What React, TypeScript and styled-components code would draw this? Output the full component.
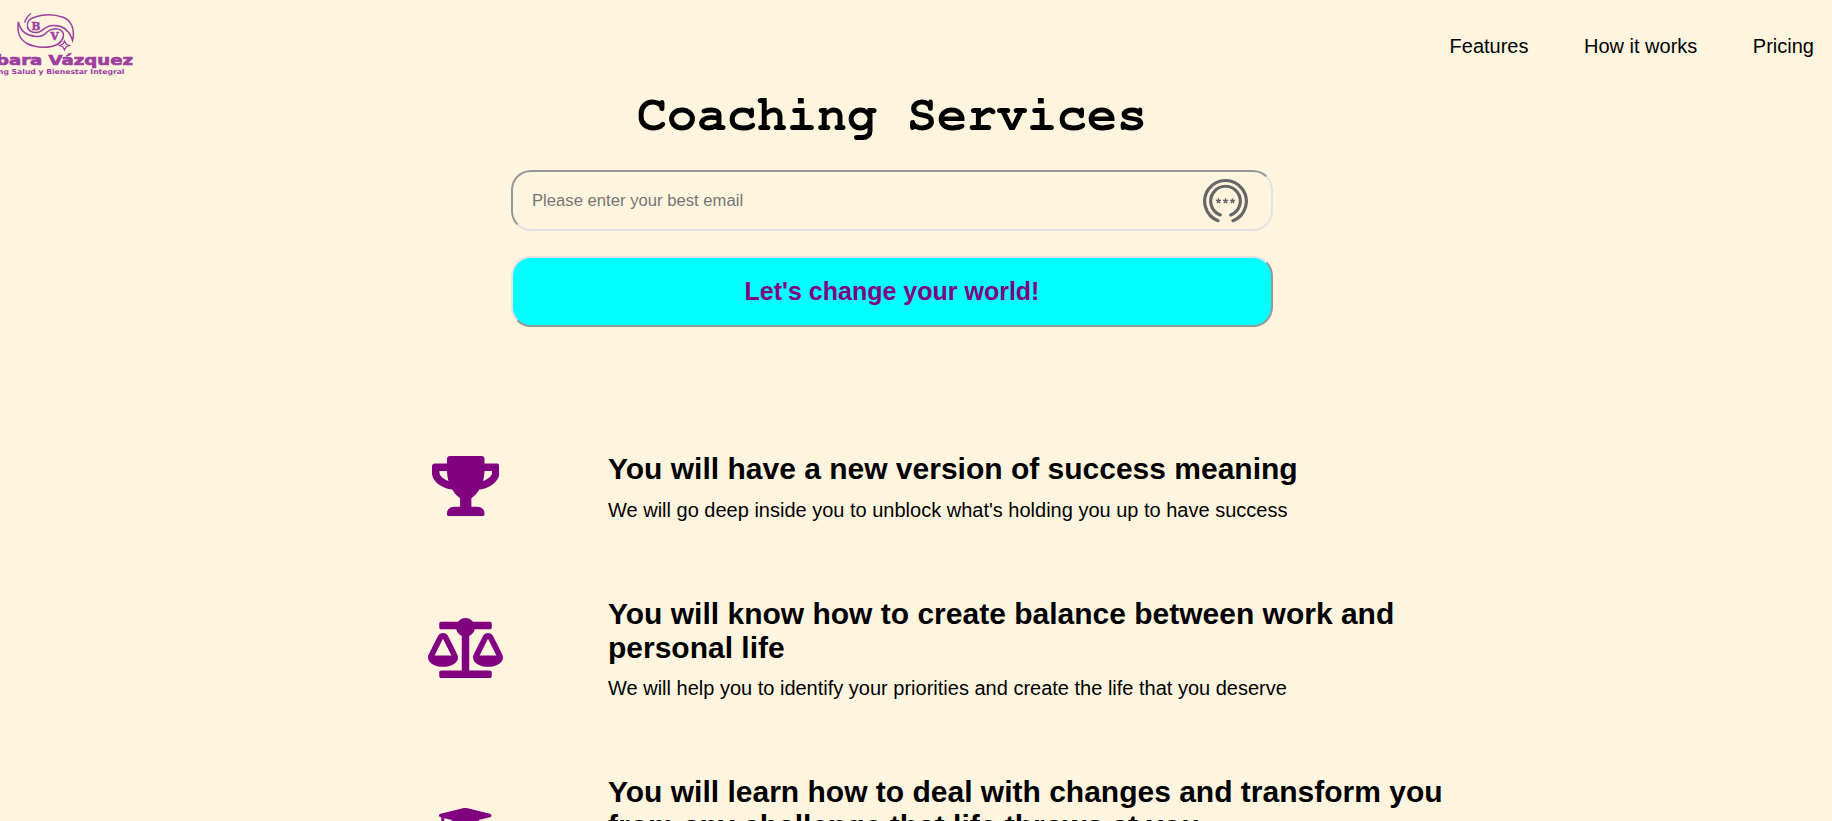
import React from 'react';
import styled, { createGlobalStyle } from 'styled-components';
import { FaTrophy, FaBalanceScale, FaUserGraduate } from 'react-icons/fa';

const GlobalStyle = createGlobalStyle`
  * { box-sizing: border-box; margin: 0; padding: 0; }
  body {
    background: #fff5df;
    color: #000;
    font-family: Arial, "Liberation Sans", sans-serif;
  }
`;

const Page = styled.div`
  height: 821px;
  overflow: hidden;
`;

const Header = styled.header`
  display: flex;
  justify-content: space-between;
  align-items: center;
  height: 92px;
  padding-right: 18px;
`;

const Logo = styled.svg`
  display: block;
  width: 150px;
  height: 92px;
`;

const Nav = styled.nav`
  display: flex;
  gap: 55.5px;
  font-size: 20px;
  line-height: 23px;
`;

const NavLink = styled.a`
  color: #000;
  text-decoration: none;
`;

const Hero = styled.section`
  display: flex;
  flex-direction: column;
  width: 762px;
  margin-left: 511px;
`;

const Title = styled.h1`
  font: bold 50px/46px "Courier 10 Pitch", "FreeMono", "Courier New", "Liberation Mono", monospace;
  text-align: center;
  margin-bottom: 32px;
`;

const EmailField = styled.div`
  display: flex;
  align-items: center;
  height: 61px;
  padding: 0 23px 0 19px;
  border: 2px solid;
  border-color: #979797 #e2e2e2 #e2e2e2 #979797;
  border-radius: 20px;
  margin-bottom: 25px;
`;

const EmailInput = styled.input`
  flex: 1;
  border: 0;
  outline: 0;
  background: transparent;
  font: 16.67px Arial, "Liberation Sans", sans-serif;
  &::placeholder { color: #757575; }
`;

const Submit = styled.button`
  height: 71px;
  border: 2px solid;
  border-color: #e2e2e2 #979797 #979797 #e2e2e2;
  border-radius: 20px;
  background: #00ffff;
  color: #800080;
  font: bold 25px Arial, "Liberation Sans", sans-serif;
`;

const Features = styled.ul`
  display: flex;
  flex-direction: column;
  gap: 75px;
  margin: 125px 0 0 408px;
  list-style: none;
`;

const Feature = styled.li`
  display: flex;
  align-items: center;
`;

const IconCell = styled.div<{ $width: number }>`
  display: flex;
  justify-content: center;
  flex-shrink: 0;
  width: 115px;
  margin: 0 85px 1px 0;
  color: #800080;
  svg {
    display: block;
    flex-shrink: 0;
    width: ${(p) => p.$width}px;
    height: 60px;
  }
`;

const Copy = styled.div`
  width: 860px;
`;

const FeatureTitle = styled.h2`
  font-size: 30px;
  line-height: 34px;
  margin-bottom: 12.6px;
`;

const FeatureText = styled.p<{ $lines: number }>`
  min-height: ${(p) => p.$lines * 23}px;
  font-size: 20px;
  line-height: 23px;
`;

const features = [
  {
    Icon: FaTrophy,
    iconWidth: 67.5,
    lines: 1,
    title: 'You will have a new version of success meaning',
    text: "We will go deep inside you to unblock what's holding you up to have success",
  },
  {
    Icon: FaBalanceScale,
    iconWidth: 75,
    lines: 1,
    title: 'You will know how to create balance between work and personal life',
    text: 'We will help you to identify your priorities and create the life that you deserve',
  },
  {
    Icon: FaUserGraduate,
    iconWidth: 52.5,
    lines: 2,
    title: 'You will learn how to deal with changes and transform you from any challenge that life throws at you',
    text: '',
  },
];

const BrandLogo = () => (
  <Logo viewBox="0 0 150 92" fill="none" stroke="#9c3f9f" strokeWidth="1.5">
    <g transform="translate(0 0.5)">
      <path d="M24.500 22 C26 18 28 15 31 13" />
      <path d="M72.500 40 C75 30 72 20 63 16.700 C54 13.500 44 13.500 35 16.500 C29 18.500 26.500 22 27.500 26 C28.500 31 33 33 39 31.500 C44 30 44 25.500 53 25 C63 24.500 68 29 71.500 37 Z" />
      <path d="M18.500 21.500 C16.500 32 20 39 27 43 C37 48 50 48 58 43.500 C63.500 40 65.500 33 61 29.800 C57 27 50 28.500 47 31.500 C44 35 41 36.500 36 36 C26 35 20 30 18.500 21.500 Z" />
      <path d="M64.500 40.500 L66 43.500 L69.500 45 L66 46.500 L64.500 49.500 L63 46.500 L59.500 45 L63 43.500 Z" strokeWidth="1.300" />
    </g>
    <g fill="#9c3f9f" stroke="none" fontWeight="bold">
      <text x="31.500" y="30" fontSize="10.500" fontFamily="DejaVu Serif, serif" stroke="#9c3f9f" strokeWidth="0.500">B</text>
      <text x="50.500" y="40" fontSize="10.500" fontFamily="DejaVu Serif, serif" stroke="#9c3f9f" strokeWidth="0.500">V</text>
      <text x="-4" y="65" fontSize="14.500" fontFamily="DejaVu Sans, sans-serif" textLength="137" lengthAdjust="spacingAndGlyphs" stroke="#9c3f9f" strokeWidth="0.700">bara Vázquez</text>
      <text x="-2" y="73.500" fontSize="6.800" fontFamily="DejaVu Sans, sans-serif" textLength="126.500" lengthAdjust="spacingAndGlyphs">ng Salud y Bienestar Integral</text>
    </g>
  </Logo>
);

const PasswordIcon = () => (
  <svg width="46" height="46" viewBox="0 0 46 46" fill="none" stroke="#666" strokeWidth="3.2" strokeLinecap="round">
    <path d="M16 42.700 A20.800 20.800 0 1 1 31 42.700" />
    <path d="M18.300 36.900 A14.800 14.800 0 1 1 28.700 36.900" />
    <g strokeWidth="1.4" strokeLinecap="butt">
      {[16.5, 23.5, 30.5].map((x) => (
        <path key={x} d={`M${x} 23v-2.700M${x} 23l2.500-.8M${x} 23l1.600 2.200M${x} 23l-1.600 2.200M${x} 23l-2.500-.8`} />
      ))}
    </g>
  </svg>
);

export default function App() {
  return (
    <Page>
      <GlobalStyle />
      <Header>
        <BrandLogo />
        <Nav>
          <NavLink>Features</NavLink>
          <NavLink>How it works</NavLink>
          <NavLink>Pricing</NavLink>
        </Nav>
      </Header>
      <Hero>
        <Title>Coaching Services</Title>
        <EmailField>
          <EmailInput type="email" placeholder="Please enter your best email" />
          <PasswordIcon />
        </EmailField>
        <Submit>Let's change your world!</Submit>
      </Hero>
      <Features>
        {features.map(({ Icon, iconWidth, lines, title, text }) => (
          <Feature key={title}>
            <IconCell $width={iconWidth}><Icon /></IconCell>
            <Copy>
              <FeatureTitle>{title}</FeatureTitle>
              <FeatureText $lines={lines}>{text}</FeatureText>
            </Copy>
          </Feature>
        ))}
      </Features>
    </Page>
  );
}
